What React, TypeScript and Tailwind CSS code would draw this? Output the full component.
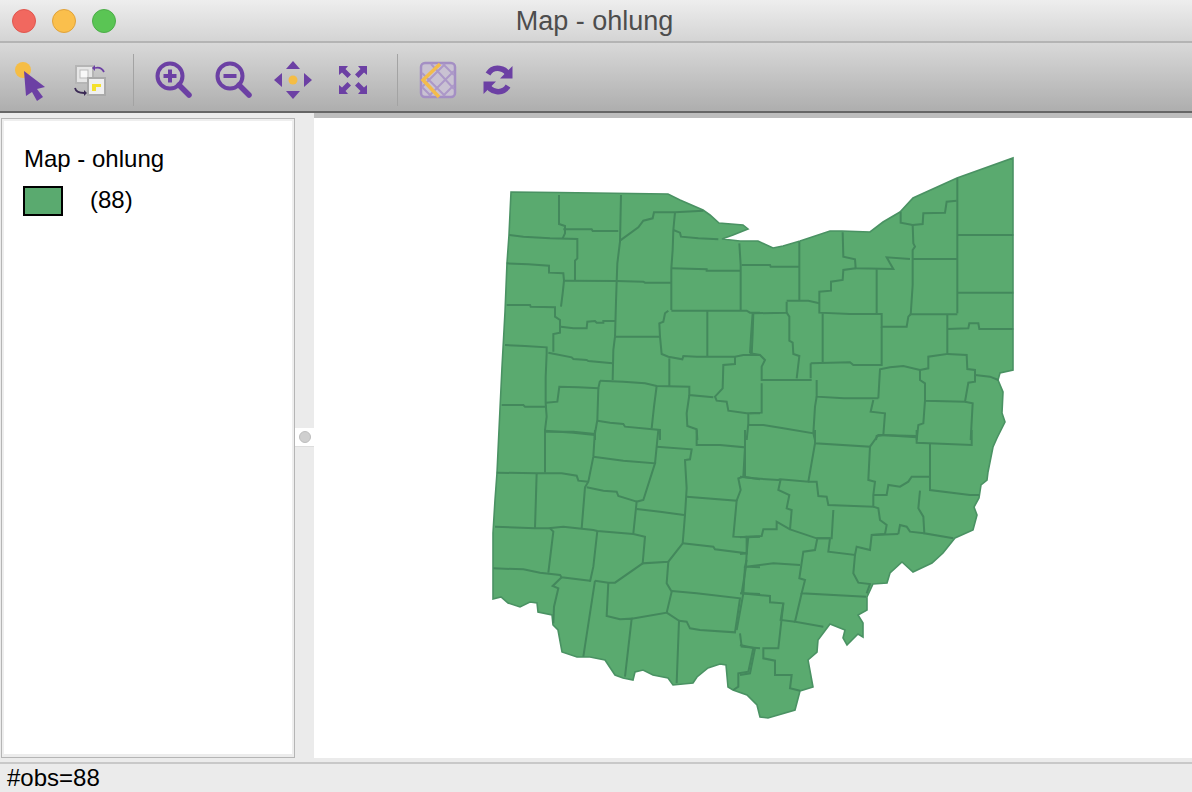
import React from "react";

const OUTLINE =
  "511,192 558,192.5 668,194 680,200 703,210 710,215 719,223 743,225 748,229 733,235 722,239 740,241 758,241 773,248 783,246 800,241 830,231 842,231 870,232 883,222 900,212 913,198 957,178 1013,158 1013,370 1000,373 998,380 1003,392 1002,413 1005,422 997,438 993,447 988,472 987,480 981,485 979,498 974,507 977,515 973,530 955,538 943,553 932,563 913,572 902,562 890,573 887,583 873,584 867,597 867,610 858,615 863,623 863,637 858,634 847,645 843,638 845,630 830,624 818,640 817,652 808,660 813,687 800,691 795,710 768,718 760,717 757,705 747,695 733,690 728,687 726,665 720,664 708,668 697,677 693,683 673,685 668,678 653,675 643,670 635,672 633,680 623,678 615,675 605,660 590,657 577,657 562,652 558,630 553,625 552,615 538,612 537,603 530,602 520,607 508,603 501,597 493,599 493,533 495,500 497,473 499,430 502,367 505,312 507,263 509,235";

const Z5 = [
  "237,135 237,222 255,228 255,250 248,265",
  "250,238 335,238 338,243 415,243",
  "423,135 420,275 412,340 410,395 408,455 405,560 400,600 398,690",
  "420,272 475,232 490,212 518,205 522,187 585,187 670,182",
  "585,187 580,240 578,300 574,355 574,480",
  "580,240 600,248 603,260 655,265 715,268",
  "575,355 680,358 680,362 780,362",
  "778,280 782,345 782,480",
  "785,345 840,345",
  "574,482 800,482 810,488 840,488",
  "820,488 818,550 815,615",
  "88,255 130,260 210,265 292,267 292,325 285,332 285,392",
  "80,340 145,343 207,347 207,368 250,370 252,392 248,430 243,470",
  "250,392 410,393 490,395 495,398 574,398",
  "80,465 150,465 152,470 225,472 225,500 240,510 240,548 220,552 220,605",
  "243,530 280,535 320,535 322,515 345,513 350,518 370,518 370,513 405,513",
  "75,585 135,588 200,592 200,610 197,680 197,760 200,800 195,840 195,870",
  "205,608 275,622 280,627 320,630 325,633 398,640",
  "405,560 540,560 538,520 550,515 555,490 565,482",
  "682,482 682,620",
  "540,560 545,612 565,620 607,628 610,618 650,620 765,620 790,615 840,615",
  "568,625 568,710",
  "765,620 765,642 730,645 728,715 705,740 710,752 740,755 745,782 800,790 840,790",
  "360,692 430,695 495,700 530,708 628,710 628,735 700,742",
  "198,758 232,755 238,710 295,712 355,715 360,692",
  "355,715 352,810 345,850 345,870",
  "530,708 522,770 515,835",
  "352,812 390,818 430,822 435,830 540,840 540,870",
  "628,735 620,790 622,828 650,838 652,870",
  "65,765 130,765 135,770 200,770",
  "195,842 280,848 345,855",
  "805,790 805,820 800,870",
  "805,825 840,825",
];

const Z6 = [
  "622,85 622,490",
  "0,345 60,345 62,350 148,350",
  "452,185 452,218 488,225 518,222 520,190 585,188 590,155 620,152",
  "488,225 490,280 495,290 488,300 488,405 482,495",
  "622,255 790,255",
  "622,428 790,428",
  "488,327 622,327",
  "480,493 622,493",
  "148,275 148,450",
  "278,247 280,320 315,328 317,355 430,357 420,340 410,322 480,327",
  "317,355 280,360 278,390 243,395 243,422 208,425 208,488 300,492 395,492 395,530 470,530 475,500 482,493",
  "380,358 380,492",
  "110,452 175,452 208,460",
  "110,455 110,488 8,490 3,560 0,610",
  "110,488 118,500 118,572 128,578 130,612 148,618 140,685",
  "218,490 218,637",
  "0,610 30,615 45,630 35,650 35,690 185,690",
  "182,640 182,685",
  "182,640 300,637 310,645 395,645 395,530",
  "592,495 592,612 535,620 535,655 510,660 460,648 420,652 390,658 385,745",
  "592,537 655,535 658,520 685,520 688,537 790,537",
  "592,612 650,615 652,657 675,660 675,695 655,698 645,755 525,752 525,700 510,690 510,660",
  "675,675 720,680 745,690",
  "525,752 520,820 505,825 500,870",
  "645,755 668,760 662,870",
  "385,745 282,745 200,740 200,690",
  "200,740 195,770 190,850",
  "370,750 362,785 405,790 400,855 500,862",
  "400,855 380,858 378,870",
  "0,790 35,788 35,700",
  "0,825 40,825 100,835 190,850 195,870",
];

const Z7 = [
  "195,0 195,128",
  "197,5 280,5 345,12",
  "345,0 340,80 325,155 315,172 305,295",
  "50,128 170,130 245,130 290,137 295,152 325,155",
  "170,130 165,295",
  "340,80 430,92 525,100 490,210 470,215 460,310",
  "535,0 530,50 525,100",
  "530,50 635,58 630,88 615,90 620,175 615,255 608,340 565,395 488,400 495,320 460,312 352,303 340,300 250,290 205,295 165,295 45,290",
  "650,0 650,45 720,45 795,52 795,0",
  "320,172 370,182 410,185 415,198 470,215",
  "470,237 540,245 612,255",
  "620,200 770,212 760,320 800,322 840,320",
  "795,52 790,140 775,145 782,180 770,212",
  "790,140 840,148",
  "210,295 220,305 205,428",
  "352,303 340,410 330,455",
  "40,415 130,418 180,428 240,435 245,442 330,452",
  "245,442 218,468 235,475 222,530 220,580",
  "345,452 310,680",
  "345,452 385,458 405,458 488,400",
  "385,458 380,558 420,568 455,566 435,740",
  "455,566 560,548 575,485 560,460 565,395",
  "560,548 597,572 590,760",
  "597,572 620,575 630,595 660,600 765,607 780,505 650,490 575,483",
  "780,610 785,650 840,655",
  "805,320 800,370 705,358 700,350 608,340",
  "800,390 795,410 840,412",
  "795,410 790,490 770,600",
  "790,490 840,492",
  "820,655 805,725 775,730 775,770 760,780",
];

const Z8 = [
  "15,0 15,140",
  "0,140 40,145 115,150 120,148 205,155 225,40",
  "225,0 225,40 390,50 385,150 405,155 400,195 400,230 265,225 260,200 235,198 230,155 205,155",
  "390,50 415,15 530,18 530,0",
  "530,18 530,38 695,45 695,0",
  "570,40 570,180 690,195 718,195",
  "570,140 515,140 505,155 480,170 445,165 440,195 400,195",
  "540,182 535,235 550,260 553,310 640,325",
  "400,230 415,235 420,270 440,285 435,312 395,315 390,360 350,350 345,375 265,365 270,325",
  "475,312 480,285 500,290 510,305 553,310",
  "395,315 475,312",
  "345,375 340,430 355,458 390,462 380,490",
  "280,240 275,325 230,325 150,298 155,240 140,235 148,195 115,180 122,148",
  "270,325 232,325 225,360 190,365 178,445 195,450 185,490 378,500",
  "185,490 165,575 250,590",
  "150,298 110,275 110,298 70,298 65,318 20,320 20,370 0,372",
  "20,320 0,322",
  "20,370 18,410 100,400 180,405",
  "18,410 5,490 90,498 90,517 130,520 122,570 165,575",
  "130,520 115,655 70,655 70,685 105,692 105,735 155,735 150,775 180,782",
  "0,490 5,490",
  "0,645 45,655 30,730 0,735",
];

function Lines({ x, y, data }: { x: number; y: number; data: string[] }) {
  return (
    <g transform={`translate(${x} ${y}) scale(0.33333)`} fill="none" stroke="#43885c" strokeWidth={6} strokeLinejoin="miter">
      {data.map((p) => (
        <polyline key={p} points={p} />
      ))}
    </g>
  );
}

function OhioMap() {
  return (
    <svg viewBox="314 118 878 640" className="block h-[640px] w-[878px]">
      <polygon points={OUTLINE} fill="#5aaa6f" stroke="#4a9263" strokeWidth={1.6} />
      <Lines x={480} y={150} data={Z5} />
      <Lines x={750} y={150} data={Z6} />
      <Lines x={480} y={430} data={Z7} />
      <Lines x={740} y={430} data={Z8} />
    </svg>
  );
}

const P = "#6c40a4";

function SelectIcon() {
  return (
    <svg width="40" height="44" viewBox="0 0 40 44">
      <circle cx="13" cy="12" r="8" fill="#f5bd45" />
      <path d="M14 13 L35 29 L27 31 L33 39 L27 43 L22 34 L16 38 Z" fill={P} />
    </svg>
  );
}

function SwapIcon() {
  return (
    <svg width="40" height="40" viewBox="0 0 40 40">
      <rect x="6" y="6" width="17" height="17" fill="#e6e6e6" stroke="#b5b5b5" strokeWidth="2" />
      <rect x="10" y="10" width="8" height="8" fill="#f8f8f8" stroke="#bbb" />
      <rect x="18" y="18" width="17" height="17" fill="#efefef" stroke="#aaa" strokeWidth="2" />
      <path d="M22 24 H31 V27 H26 V31 H22 Z" fill="#f4e02c" />
      <path d="M34 12 C32 8 29 7 25 8" fill="none" stroke={P} strokeWidth="1.8" />
      <path d="M25 5 L22 8 L25 11 Z" fill={P} />
      <path d="M5 28 C6 32 9 33 14 33" fill="none" stroke="#3b2a55" strokeWidth="1.8" />
      <path d="M14 30 L17 33 L14 36 Z" fill="#3b2a55" />
    </svg>
  );
}

function ZoomIcon({ plus }: { plus?: boolean }) {
  return (
    <svg width="40" height="40" viewBox="0 0 40 40">
      <circle cx="17" cy="16" r="12.5" fill="none" stroke={P} strokeWidth="4" />
      <path d="M26 25 L36 35" stroke={P} strokeWidth="5.5" strokeLinecap="round" />
      <path d="M10.5 16 H23.5" stroke={P} strokeWidth="4" />
      {plus ? <path d="M17 9.5 V22.5" stroke={P} strokeWidth="4" /> : null}
    </svg>
  );
}

function PanIcon() {
  return (
    <svg width="40" height="40" viewBox="0 0 40 40">
      <circle cx="20" cy="20" r="4.5" fill="#f5bd45" />
      <path d="M20 1 L27 9 H13 Z M20 39 L27 31 H13 Z M1 20 L9 13 V27 Z M39 20 L31 13 V27 Z" fill={P} />
    </svg>
  );
}

function FitIcon() {
  return (
    <svg width="32" height="32" viewBox="0 0 32 32">
      <path
        d="M2 2 H11 L8.5 5 L14 10.5 L10.5 14 L5 8.5 L2 11 Z M30 2 V11 L27 8.5 L21.5 14 L18 10.5 L23.5 5 L21 2 Z M2 30 V21 L5 23.5 L10.5 18 L14 21.5 L8.5 27 L11 30 Z M30 30 H21 L23.5 27 L18 21.5 L21.5 18 L27 23.5 L30 21 Z"
        fill={P}
      />
    </svg>
  );
}

function LatticeIcon() {
  return (
    <svg width="38" height="38" viewBox="0 0 38 38">
      <rect x="2" y="2" width="34" height="34" rx="4" fill="#c9c2d2" stroke="#a48fc4" strokeWidth="2.5" />
      <path
        d="M12 3 L35 28 M24 3 L35 14 M3 12 L26 35 M3 26 L12 35 M26 3 L3 26 M35 10 L10 35 M35 24 L24 35"
        stroke="#ac98c8"
        strokeWidth="2"
        fill="none"
      />
      <path d="M21 3 L4 19 L20 36" stroke="#f3bc4b" strokeWidth="3.5" fill="none" />
    </svg>
  );
}

function RefreshIcon() {
  return (
    <svg width="32" height="32" viewBox="0 0 32 32">
      <path d="M27 13 A11.5 11.5 0 0 0 6 10" fill="none" stroke={P} strokeWidth="5.5" />
      <path d="M5 19 A11.5 11.5 0 0 0 26 22" fill="none" stroke={P} strokeWidth="5.5" />
      <path d="M30.5 2 V14.5 H18 Z M1.5 30 V17.5 H14 Z" fill={P} />
    </svg>
  );
}

function Cell({ children }: { children: React.ReactNode }) {
  return <div className="flex h-[52px] w-[60px] items-center justify-center">{children}</div>;
}

export default function App() {
  return (
    <div className="flex h-[792px] w-[1192px] flex-col overflow-hidden bg-[#ebebeb] font-['Liberation_Sans',Arial,sans-serif] text-black">
      <div className="grid h-[43px] grid-cols-[1fr_auto_1fr] items-center border-b-2 border-[#b4b4b4] bg-gradient-to-b from-[#eeeeee] to-[#d4d4d4]">
        <div className="flex items-center gap-4 pl-3">
          <span className="h-6 w-6 rounded-full border border-[#e0564e] bg-[#f1685f]" />
          <span className="h-6 w-6 rounded-full border border-[#e0a23a] bg-[#fabf4c]" />
          <span className="h-6 w-6 rounded-full border border-[#4cad48] bg-[#5ac554]" />
        </div>
        <div className="pr-[3px] pt-[2px] text-[27px] leading-none text-[#4d4d4d]">Map - ohlung</div>
        <div />
      </div>

      <div className="flex h-[70px] items-center border-b-2 border-[#666666] bg-gradient-to-b from-[#d9d9d9] to-[#aeaeae] pt-[6px]">
        <Cell><SelectIcon /></Cell>
        <Cell><SwapIcon /></Cell>
        <div className="ml-[13px] mr-[9px] h-[52px] w-px bg-[#a3a3a3]" />
        <Cell><ZoomIcon plus /></Cell>
        <Cell><ZoomIcon /></Cell>
        <Cell><PanIcon /></Cell>
        <Cell><FitIcon /></Cell>
        <div className="ml-[14px] mr-[10px] h-[52px] w-px bg-[#a3a3a3]" />
        <Cell><LatticeIcon /></Cell>
        <Cell><RefreshIcon /></Cell>
      </div>

      <div className="flex h-[649px]">
        <div className="ml-px mt-[5px] h-[640px] w-[294px] border border-[#b5b5b5] bg-white">
          <div className="h-full border-2 border-b-[3px] border-[#eeeeee] border-b-[#ececec] bg-white pl-[20px] pt-[24px]">
            <div className="text-[24px] leading-[28px]">Map - ohlung</div>
            <div className="mt-[13px] flex items-center">
              <span className="-ml-px h-[30px] w-[40px] border-2 border-black bg-[#5aaa6f]" />
              <span className="-mt-[2px] ml-[27px] text-[24px] leading-[28px]">(88)</span>
            </div>
          </div>
        </div>
        <div className="flex w-[19px] flex-col pt-[315px]">
          <div className="flex h-[19px] items-center border-b border-[#dddddd] bg-white pl-[4px]">
            <span className="h-[12px] w-[12px] rounded-full border border-[#bdbdbd] bg-[#cfcfcf]" />
          </div>
        </div>
        <div className="flex flex-1 flex-col">
          <div className="h-[5px] bg-[#bdbdbd]" />
          <div className="h-[640px] bg-white">
            <OhioMap />
          </div>
        </div>
      </div>

      <div className="h-[2px] bg-[#c8c8c8]" />
      <div className="flex h-[28px] items-center pl-[7px] text-[24px] leading-none">#obs=88</div>
    </div>
  );
}
